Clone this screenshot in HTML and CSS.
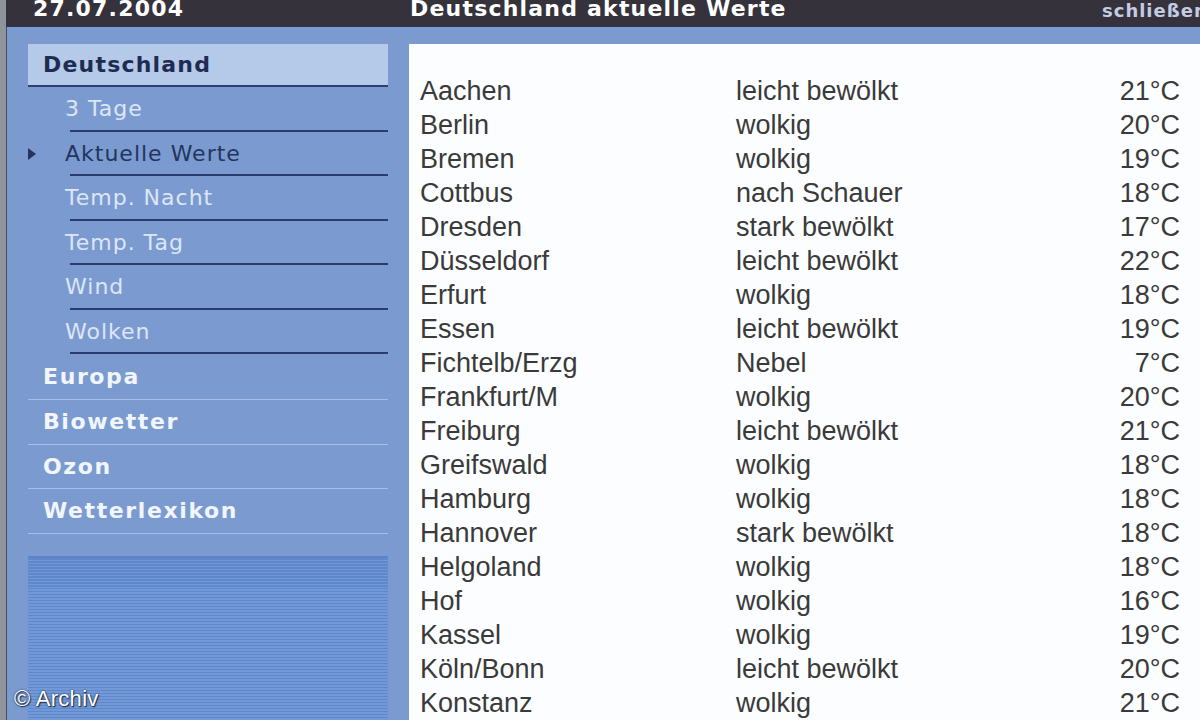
FILE: index.html
```html
<!DOCTYPE html>
<html lang="de">
<head>
<meta charset="utf-8">
<title>Deutschland aktuelle Werte</title>
<link rel="stylesheet" href="styles.css">
</head>
<body>
<div class="page">
  <header class="topbar">
    <span class="date">27.07.2004</span>
    <span class="title">Deutschland aktuelle Werte</span>
    <span class="close">schließen</span>
  </header>
  <div class="layout">
    <nav class="sidebar">
      <div class="nav-head">Deutschland</div>
      <ul class="subnav">
        <li class="sub"><span>3 Tage</span></li>
        <li class="sub active"><i class="marker"></i><span>Aktuelle Werte</span></li>
        <li class="sub"><span>Temp. Nacht</span></li>
        <li class="sub"><span>Temp. Tag</span></li>
        <li class="sub"><span>Wind</span></li>
        <li class="sub"><span>Wolken</span></li>
      </ul>
      <ul class="mainnav">
        <li class="nav-main">Europa</li>
        <li class="nav-main">Biowetter</li>
        <li class="nav-main">Ozon</li>
        <li class="nav-main">Wetterlexikon</li>
      </ul>
      <div class="stripes"></div>
    </nav>
    <main class="content">
      <table class="values">
        <tbody>
          <tr><td>Aachen</td><td>leicht bewölkt</td><td>21°C</td></tr>
          <tr><td>Berlin</td><td>wolkig</td><td>20°C</td></tr>
          <tr><td>Bremen</td><td>wolkig</td><td>19°C</td></tr>
          <tr><td>Cottbus</td><td>nach Schauer</td><td>18°C</td></tr>
          <tr><td>Dresden</td><td>stark bewölkt</td><td>17°C</td></tr>
          <tr><td>Düsseldorf</td><td>leicht bewölkt</td><td>22°C</td></tr>
          <tr><td>Erfurt</td><td>wolkig</td><td>18°C</td></tr>
          <tr><td>Essen</td><td>leicht bewölkt</td><td>19°C</td></tr>
          <tr><td>Fichtelb/Erzg</td><td>Nebel</td><td>7°C</td></tr>
          <tr><td>Frankfurt/M</td><td>wolkig</td><td>20°C</td></tr>
          <tr><td>Freiburg</td><td>leicht bewölkt</td><td>21°C</td></tr>
          <tr><td>Greifswald</td><td>wolkig</td><td>18°C</td></tr>
          <tr><td>Hamburg</td><td>wolkig</td><td>18°C</td></tr>
          <tr><td>Hannover</td><td>stark bewölkt</td><td>18°C</td></tr>
          <tr><td>Helgoland</td><td>wolkig</td><td>18°C</td></tr>
          <tr><td>Hof</td><td>wolkig</td><td>16°C</td></tr>
          <tr><td>Kassel</td><td>wolkig</td><td>19°C</td></tr>
          <tr><td>Köln/Bonn</td><td>leicht bewölkt</td><td>20°C</td></tr>
          <tr><td>Konstanz</td><td>wolkig</td><td>21°C</td></tr>
        </tbody>
      </table>
    </main>
  </div>
  <div class="credit">© Archiv</div>
</div>
</body>
</html>
```

FILE: styles.css
```css
* { box-sizing: border-box; }

html, body {
  margin: 0;
  padding: 0;
  height: 720px;
  overflow: hidden;
}

body {
  background: #7b9bd0;
  font-family: "DejaVu Sans", Verdana, sans-serif;
}

.page {
  position: relative;
  width: 1200px;
  height: 720px;
  border-left: 6px solid #8f939c;
  box-shadow: inset 1px 0 0 #4a4c55;
  overflow: hidden;
}

/* top bar */
.topbar {
  display: grid;
  grid-template-columns: 377px 692px auto;
  height: 27px;
  padding-left: 27px;
  background: #36323b;
  border-bottom: 1px solid #2c3550;
  color: #ffffff;
  overflow: hidden;
  white-space: nowrap;
}

.topbar span {
  font-weight: bold;
  font-size: 22px;
  line-height: 22px;
  letter-spacing: 1.2px;
  margin-top: -2px;
}

.topbar .close {
  font-size: 18px;
  letter-spacing: 1px;
  color: #c3cce4;
  margin-top: 0;
}

/* layout */
.layout {
  display: flex;
  height: 693px;
}

.sidebar {
  flex: 0 0 403px;
  padding: 17px 21px 0 22px;
  display: flex;
  flex-direction: column;
}

.nav-head {
  height: 43px;
  padding-left: 15px;
  background: #b5c9e9;
  border-bottom: 2px solid #2b3f70;
  color: #1f2c52;
  font-weight: bold;
  font-size: 22px;
  line-height: 41px;
  letter-spacing: 1.2px;
}

.subnav, .mainnav {
  list-style: none;
  margin: 0;
  padding: 0;
}

.sub {
  position: relative;
  margin-left: 42px;
  height: 44.5px;
  border-bottom: 2px solid #2a3c6c;
  font-size: 22px;
  line-height: 44px;
  letter-spacing: 1px;
  color: #dde6f6;
}

.sub span {
  margin-left: -5px;
}

.sub.active {
  color: #23355f;
}

.marker {
  position: absolute;
  left: -42px;
  top: 16px;
  width: 0;
  height: 0;
  border-top: 6px solid transparent;
  border-bottom: 6px solid transparent;
  border-left: 8px solid #23355f;
}

.nav-main {
  height: 44.5px;
  padding-left: 15px;
  border-bottom: 1.5px solid #a7bfe5;
  color: #f1f5fc;
  font-weight: bold;
  font-size: 22px;
  line-height: 44px;
  letter-spacing: 1.6px;
}

.nav-main:first-child {
  height: 46px;
  line-height: 46px;
}

.stripes {
  flex: 1;
  margin-top: 22px;
  border-top: 2px solid #5f83c2;
  background: repeating-linear-gradient(to bottom, #5e87cc 0, #5e87cc 1.5px, #7299d6 1.5px, #7299d6 3px);
}

/* content */
.content {
  flex: 1;
  margin-top: 17px;
  background: #fcfdfe;
  padding: 30px 20px 0 11px;
}

.values {
  width: 100%;
  border-collapse: collapse;
  font-family: "Liberation Sans", Arial, sans-serif;
  font-size: 27px;
  color: #3a3a3a;
}

.values td {
  padding: 0;
  height: 34px;
  line-height: 34px;
  white-space: nowrap;
}

.values td:first-child {
  width: 316px;
}

.values td:last-child {
  text-align: right;
}

/* watermark */
.credit {
  position: absolute;
  left: 8px;
  bottom: 8px;
  font-family: "Liberation Sans", Arial, sans-serif;
  font-size: 22px;
  letter-spacing: 0.3px;
  color: #ffffff;
  text-shadow: 1px 1px 1px #1d2a45, 0 0 2px #1d2a45;
}
```
